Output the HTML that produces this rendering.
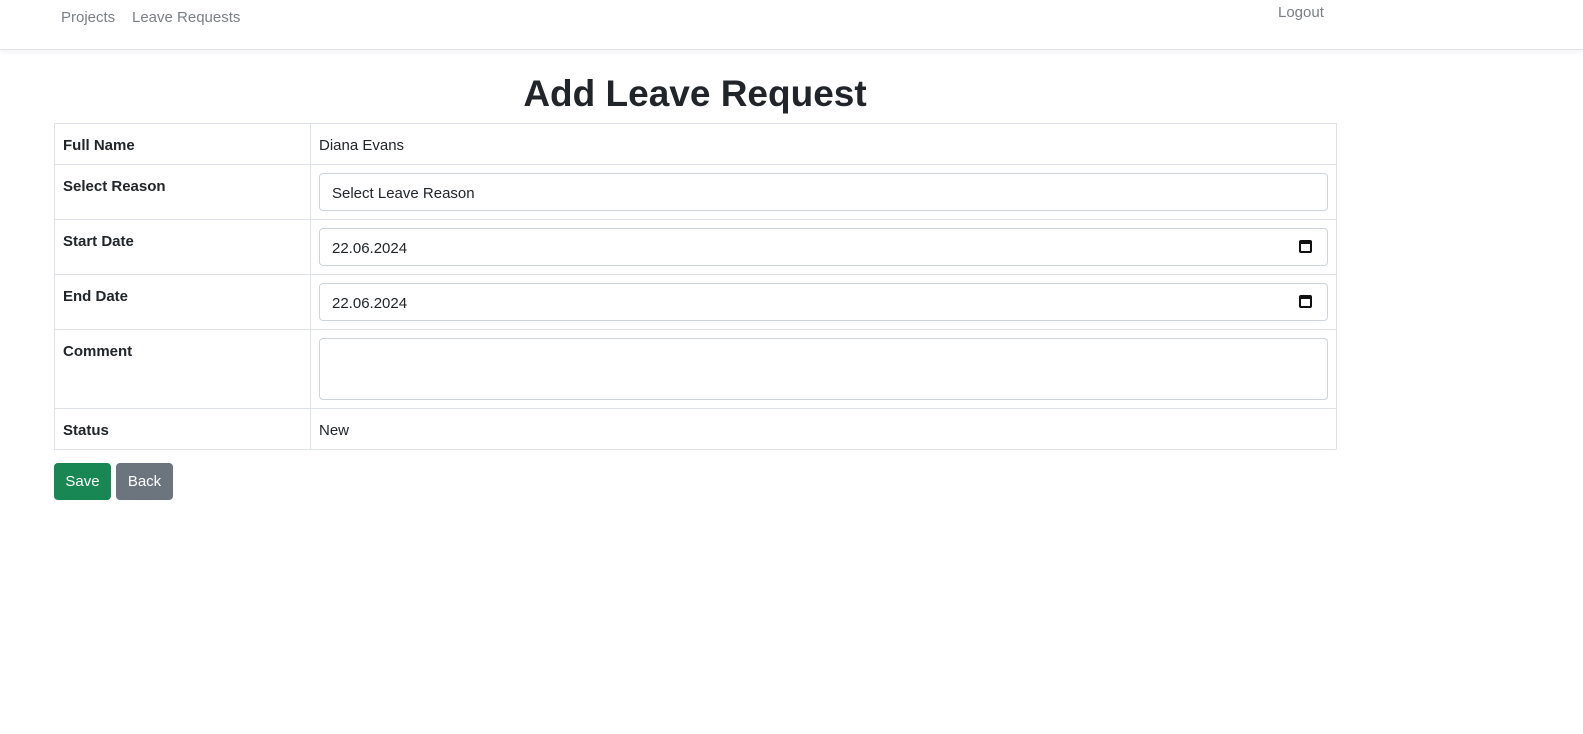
<!DOCTYPE html>
<html><head><meta charset="utf-8"><style>
*{box-sizing:border-box;margin:0;padding:0}
body{width:1583px;height:734px;background:#fff;font-family:"Segoe UI","Liberation Sans",sans-serif;color:#212529;font-size:15px;position:relative;overflow:hidden}
.nav{position:absolute;left:0;top:0;width:1583px;height:50px;border-bottom:1px solid #dee2e6;box-shadow:0 2px 6px rgba(0,0,0,.06)}
.nav a{position:absolute;color:#7b7f84;font-size:15px;text-decoration:none}
h1{position:absolute;left:0;width:1390px;text-align:center;top:69px;font-size:37px;font-weight:700;line-height:50px}
table{position:absolute;left:54px;top:123px;width:1283px;border-collapse:collapse}
td{border:1px solid #dee2e6;padding:10px 8px 6px;vertical-align:top;font-size:15px;line-height:24px}
td.in-cell{padding:8px}
td.l{width:256px;font-weight:700}
.in{border:1px solid #ced4da;border-radius:4px;height:38px;padding:8px 12px 4px;position:relative;font-size:15px;line-height:24px}
.cal{position:absolute;right:15px;top:11px;width:13px;height:13px;border:2px solid #111;border-top-width:4px;border-radius:2px}
.btn{position:absolute;top:463px;height:37px;color:#fff;font-size:15px;line-height:38px;text-align:center;border-radius:4px}
</style></head><body>
<div class="nav">
<a style="left:61px;top:9px">Projects</a>
<a style="left:132px;top:9px">Leave Requests</a>
<a style="left:1278px;top:4px">Logout</a>
</div>
<h1>Add Leave Request</h1>
<table>
<tr style="height:40px"><td class="l">Full Name</td><td>Diana Evans</td></tr>
<tr style="height:55px"><td class="l">Select Reason</td><td class="in-cell"><div class="in">Select Leave Reason</div></td></tr>
<tr style="height:54px"><td class="l">Start Date</td><td class="in-cell"><div class="in">22.06.2024<span class="cal"></span></div></td></tr>
<tr style="height:55px"><td class="l">End Date</td><td class="in-cell"><div class="in">22.06.2024<span class="cal"></span></div></td></tr>
<tr style="height:78px"><td class="l">Comment</td><td class="in-cell"><div class="in" style="height:62px"></div></td></tr>
<tr style="height:41px"><td class="l">Status</td><td>New</td></tr>
</table>
<div class="btn" style="left:54px;width:57px;background:#198754">Save</div>
<div class="btn" style="left:116px;width:57px;background:#6c757d">Back</div>
</body></html>
